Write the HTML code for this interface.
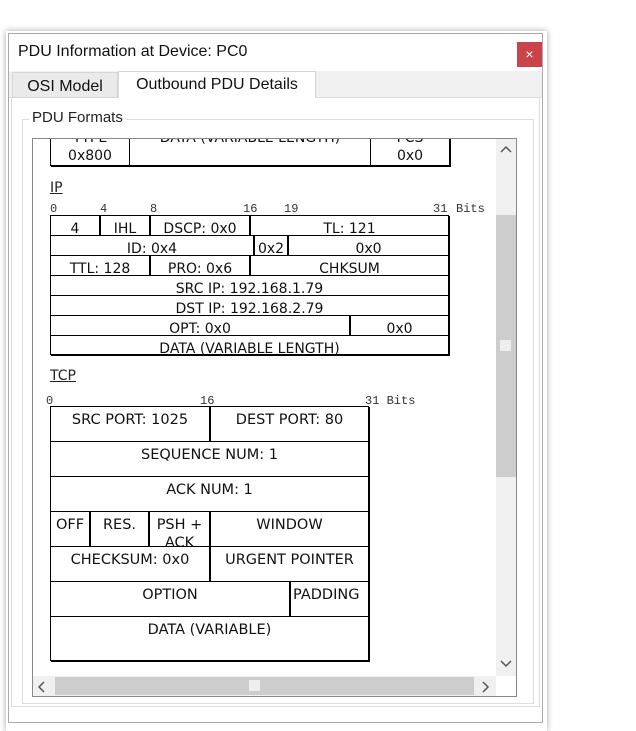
<!DOCTYPE html>
<html><head><meta charset="utf-8"><style>
*{margin:0;padding:0;box-sizing:border-box}
body{width:636px;height:719px;background:#fff;position:relative;overflow:hidden;font-family:"DejaVu Sans","Liberation Sans",sans-serif;color:#111}
.a{position:absolute}
.c{position:absolute;border:1px solid #000;box-shadow:1px 1px 0 #000;text-align:center;font-size:14px;overflow:hidden;white-space:nowrap;background:#fff}
.ip{line-height:20px;padding-top:3px}
.tc{line-height:18px;padding-top:4px;font-size:14.5px}
.m{position:absolute;font-family:"Liberation Mono",monospace;font-size:12px;color:#333}
.h{position:absolute;font-size:14px;text-decoration:underline;color:#222}
</style></head><body>
<div class="a" style="left:6px;top:31px;width:541px;height:700px;box-shadow:0 0 6px rgba(0,0,0,.35);background:#fff"></div>
<div class="a" style="left:8px;top:33px;width:535px;height:690px;background:#fff;border:1px solid #aaa"></div>
<div class="a" style="left:18px;top:43px;font-size:16px;font-family:'Liberation Sans',sans-serif;color:#111">PDU Information at Device: PC0</div>
<div class="a" style="left:517px;top:42px;width:25px;height:25px;background:#c9444a;color:#fff;font-size:14px;text-align:center;line-height:24px;font-family:'Liberation Sans',sans-serif">×</div>
<div class="a" style="left:9px;top:71px;width:533px;height:27px;background:#f0f0f0;border-bottom:1px solid #dcdcdc"></div>
<div class="a" style="left:12px;top:72px;width:106px;height:26px;background:#eaeaea;border:1px solid #d5d5d5;font-size:16px;font-family:'Liberation Sans',sans-serif;text-align:center;line-height:27px">OSI Model</div>
<div class="a" style="left:118px;top:71px;width:198px;height:28px;background:#fff;border:1px solid #d5d5d5;border-bottom:none;font-size:16px;font-family:'Liberation Sans',sans-serif;text-align:center;line-height:26px">Outbound PDU Details</div>
<div class="a" style="left:11px;top:98px;width:529px;height:609px;border:1px solid #dcdcdc;border-top:none;background:#fff"></div>
<div class="a" style="left:22px;top:119px;width:512px;height:585px;border:1px solid #dcdcdc"></div>
<div class="a" style="left:29px;top:109px;background:#fff;padding:0 3px;font-size:15px;font-family:'Liberation Sans',sans-serif;color:#222">PDU Formats</div>
<div class="a" style="left:32px;top:138px;width:485px;height:559px;border:1px solid #888;background:#fff"></div>
<div class="a" style="left:496px;top:139px;width:20px;height:537px;background:#f0f0f0"></div>
<div class="a" style="left:496px;top:215px;width:20px;height:262px;background:#cdcdcd"></div>
<div class="a" style="left:500px;top:340px;width:11px;height:11px;background:#eee"></div>
<svg class="a" style="left:499px;top:145px" width="14" height="10"><path d="M2 7 L7 2 L12 7" fill="none" stroke="#555" stroke-width="1.5"/></svg>
<svg class="a" style="left:499px;top:658px" width="14" height="10"><path d="M2 3 L7 8 L12 3" fill="none" stroke="#555" stroke-width="1.5"/></svg>
<div class="a" style="left:33px;top:676px;width:463px;height:20px;background:#f0f0f0"></div>
<div class="a" style="left:55px;top:677px;width:419px;height:18px;background:#cdcdcd"></div>
<div class="a" style="left:249px;top:680px;width:11px;height:11px;background:#eee"></div>
<svg class="a" style="left:37px;top:680px" width="10" height="14"><path d="M7 2 L2 7 L7 12" fill="none" stroke="#555" stroke-width="1.5"/></svg>
<svg class="a" style="left:480px;top:680px" width="10" height="14"><path d="M3 2 L8 7 L3 12" fill="none" stroke="#555" stroke-width="1.5"/></svg>

<div class="a" style="left:0;top:0;width:636px;height:719px;clip-path:inset(139px 140px 43px 33px)">
<div class="c ip" style="left:50px;top:120px;width:80px;height:46px;line-height:18px;padding-top:8px">TYPE<br>0x800</div>
<div class="c ip" style="left:129px;top:120px;width:242px;height:46px;line-height:18px;padding-top:8px">DATA (VARIABLE LENGTH)</div>
<div class="c ip" style="left:370px;top:120px;width:80px;height:46px;line-height:18px;padding-top:8px">FCS<br>0x0</div>

<div class="h" style="left:50px;top:180px">IP</div>
<div class="m" style="left:50px;top:202px">0</div>
<div class="m" style="left:100px;top:202px">4</div>
<div class="m" style="left:150px;top:202px">8</div>
<div class="m" style="left:243px;top:202px">16</div>
<div class="m" style="left:284px;top:202px">19</div>
<div class="m" style="left:433px;top:202px">31</div>
<div class="m" style="left:456px;top:202px">Bits</div>

<div class="c ip" style="left:50px;top:215px;width:50px;height:21px">4</div>
<div class="c ip" style="left:100px;top:215px;width:50px;height:21px">IHL</div>
<div class="c ip" style="left:150px;top:215px;width:100px;height:21px">DSCP: 0x0</div>
<div class="c ip" style="left:250px;top:215px;width:199px;height:21px">TL: 121</div>
<div class="c ip" style="left:50px;top:235px;width:204px;height:21px">ID: 0x4</div>
<div class="c ip" style="left:254px;top:235px;width:34px;height:21px">0x2</div>
<div class="c ip" style="left:288px;top:235px;width:161px;height:21px">0x0</div>
<div class="c ip" style="left:50px;top:255px;width:100px;height:21px">TTL: 128</div>
<div class="c ip" style="left:150px;top:255px;width:100px;height:21px">PRO: 0x6</div>
<div class="c ip" style="left:250px;top:255px;width:199px;height:21px">CHKSUM</div>
<div class="c ip" style="left:50px;top:275px;width:399px;height:21px">SRC IP: 192.168.1.79</div>
<div class="c ip" style="left:50px;top:295px;width:399px;height:21px">DST IP: 192.168.2.79</div>
<div class="c ip" style="left:50px;top:315px;width:300px;height:21px">OPT: 0x0</div>
<div class="c ip" style="left:350px;top:315px;width:99px;height:21px">0x0</div>
<div class="c ip" style="left:50px;top:335px;width:399px;height:20px">DATA (VARIABLE LENGTH)</div>

<div class="h" style="left:50px;top:368px">TCP</div>
<div class="m" style="left:46px;top:394px">0</div>
<div class="m" style="left:200px;top:394px">16</div>
<div class="m" style="left:365px;top:394px">31 Bits</div>

<div class="c tc" style="left:50px;top:406px;width:160px;height:36px">SRC PORT: 1025</div>
<div class="c tc" style="left:210px;top:406px;width:159px;height:36px">DEST PORT: 80</div>
<div class="c tc" style="left:50px;top:441px;width:319px;height:36px">SEQUENCE NUM: 1</div>
<div class="c tc" style="left:50px;top:476px;width:319px;height:36px">ACK NUM: 1</div>
<div class="c tc" style="left:50px;top:511px;width:40px;height:36px">OFF</div>
<div class="c tc" style="left:90px;top:511px;width:59px;height:36px">RES.</div>
<div class="c tc" style="left:149px;top:511px;width:61px;height:36px;white-space:normal;line-height:18px">PSH +<br>ACK</div>
<div class="c tc" style="left:210px;top:511px;width:159px;height:36px">WINDOW</div>
<div class="c tc" style="left:50px;top:546px;width:160px;height:36px">CHECKSUM: 0x0</div>
<div class="c tc" style="left:210px;top:546px;width:159px;height:36px">URGENT POINTER</div>
<div class="c tc" style="left:50px;top:581px;width:240px;height:36px">OPTION</div>
<div class="c tc" style="left:290px;top:581px;width:79px;height:36px;text-align:left;padding-left:2px">PADDING</div>
<div class="c tc" style="left:50px;top:616px;width:319px;height:45px">DATA (VARIABLE)</div>
</div>
</body></html>
